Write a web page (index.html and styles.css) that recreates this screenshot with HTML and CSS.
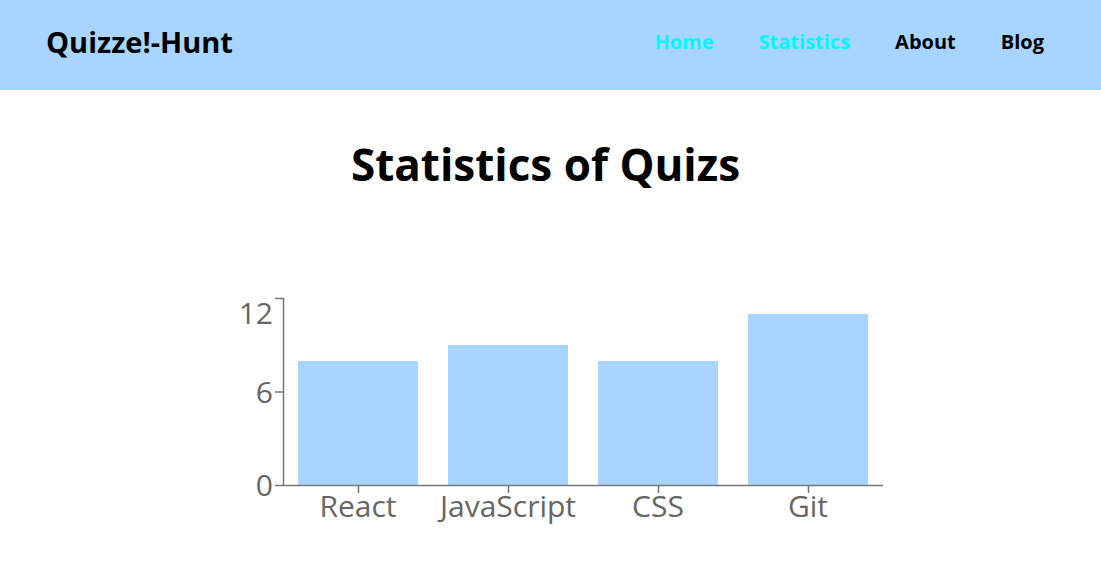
FILE: index.html
```html
<!DOCTYPE html>
<html lang="en">
<head>
<meta charset="utf-8">
<meta name="viewport" content="width=device-width, initial-scale=1">
<title>Quizze!-Hunt</title>
<link rel="stylesheet" href="styles.css">
</head>
<body>
<header class="header">
  <h2 class="brand">Quizze!-Hunt</h2>
  <nav class="nav">
    <a class="nav-link active" href="#home">Home</a>
    <a class="nav-link active" href="#statistics">Statistics</a>
    <a class="nav-link" href="#about">About</a>
    <a class="nav-link" href="#blog">Blog</a>
  </nav>
</header>
<main class="main">
  <h1 class="title">Statistics of Quizs</h1>
  <svg class="chart" viewBox="0 0 660 250" role="img" aria-label="Questions per quiz">
    <g class="bars">
      <path d="M67 81h120v125H67z"/>
      <path d="M217 65h120v141H217z"/>
      <path d="M367 81h120v125H367z"/>
      <path d="M517 34h120v172H517z"/>
    </g>
    <g class="axis">
      <path d="M44 18.500H52.500V205.500M44 112H52M44 205.500H652M127.500 206v7M277.500 206v7M427.500 206v7M577.500 206v7"/>
    </g>
    <g class="labels end">
      <text x="42" y="44">12</text>
      <text x="42" y="123">6</text>
      <text x="42" y="216">0</text>
    </g>
    <g class="labels middle">
      <text x="127" y="237">React</text>
      <text x="277" y="237">JavaScript</text>
      <text x="427" y="237">CSS</text>
      <text x="577" y="237">Git</text>
    </g>
  </svg>
</main>
</body>
</html>
```
FILE: styles.css
```css
* {
  box-sizing: border-box;
}

body {
  margin: 0;
  background: #fff;
  color: #000;
  font-family: "Segoe UI", "Open Sans", "Noto Sans", sans-serif;
}

.header {
  display: flex;
  justify-content: space-between;
  align-items: center;
  padding: 20px 57px 26px 46px;
  background: #a8d5ff;
}

.brand {
  margin: 0;
  font-size: 29px;
  line-height: 44px;
}

.nav {
  display: flex;
  gap: 45px;
}

.nav-link {
  color: #000;
  font-size: 20px;
  font-weight: 700;
  line-height: 44px;
  text-decoration: none;
}

.nav-link.active {
  color: #00f7ff;
}

.main {
  display: flex;
  flex-direction: column;
  align-items: center;
  padding: 44px 10px 0 0;
}

.title {
  margin: 0 0 86px;
  font-size: 44px;
  line-height: 60px;
  text-align: center;
}

.chart {
  width: 660px;
  max-width: 100%;
  margin-left: 30px;
}

.bars {
  fill: #a8d5ff;
}

.axis {
  fill: none;
  stroke: #777;
  stroke-width: 1.5px;
}

.labels {
  fill: #666;
  font-size: 30px;
}

.end {
  text-anchor: end;
}

.middle {
  text-anchor: middle;
}
```
